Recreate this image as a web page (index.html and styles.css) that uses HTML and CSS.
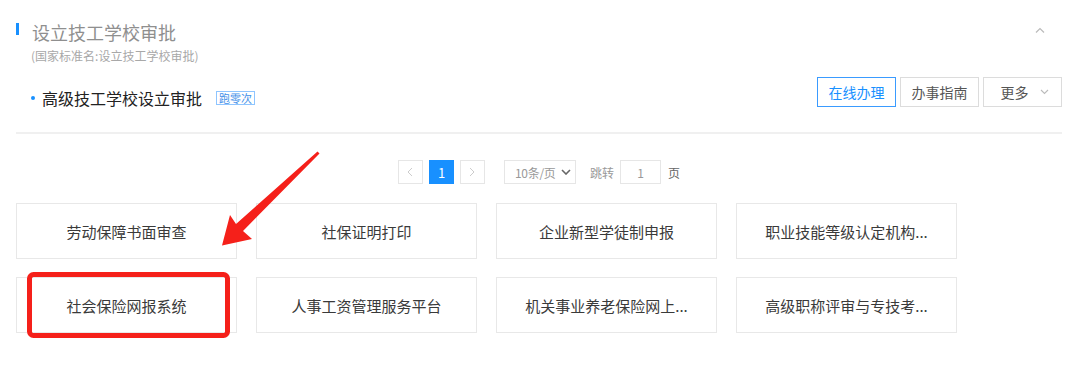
FILE: index.html
```html
<!DOCTYPE html>
<html lang="zh-CN">
<head>
<meta charset="utf-8">
<link rel="stylesheet" href="styles.css">
</head>
<body>
<div class="panel">
  <div class="head">
    <div class="head-titles">
      <h2 class="title">设立技工学校审批</h2>
      <div class="subtitle">(国家标准名:设立技工学校审批)</div>
    </div>
    <svg class="caret-up" width="10" height="6" viewBox="0 0 10 6"><path d="M1 5.5 L5 1.5 L9 5.5" fill="none" stroke="#bbb" stroke-width="1.2"/></svg>
  </div>
  <div class="item-row">
    <div class="item-left">
      <span class="dot"></span>
      <span class="item-name">高级技工学校设立审批</span>
      <span class="badge">跑零次</span>
    </div>
    <div class="actions">
      <button class="btn btn-primary">在线办理</button>
      <button class="btn">办事指南</button>
      <button class="btn btn-more">更多<svg width="9" height="6" viewBox="0 0 9 6"><path d="M1 1 L4.5 4.5 L8 1" fill="none" stroke="#bbb" stroke-width="1.1"/></svg></button>
    </div>
  </div>
  <div class="divider"></div>
  <div class="pager">
    <span class="pg pg-nav"><svg width="6" height="10" viewBox="0 0 6 10"><path d="M5 1 L1 5 L5 9" fill="none" stroke="#ccc" stroke-width="1"/></svg></span>
    <span class="pg pg-active">1</span>
    <span class="pg pg-nav"><svg width="6" height="10" viewBox="0 0 6 10"><path d="M1 1 L5 5 L1 9" fill="none" stroke="#ccc" stroke-width="1"/></svg></span>
    <span class="pg-select"><span class="pg-select-text">10条/页</span><svg width="10" height="6" viewBox="0 0 10 6"><path d="M1 1 L5 5 L9 1" fill="none" stroke="#666" stroke-width="1.6"/></svg></span>
    <span class="pg-label">跳转</span>
    <span class="pg-input">1</span>
    <span class="pg-page">页</span>
  </div>
  <div class="cards">
    <div class="card">劳动保障书面审查</div>
    <div class="card">社保证明打印</div>
    <div class="card">企业新型学徒制申报</div>
    <div class="card">职业技能等级认定机构...</div>
    <div class="card">社会保险网报系统</div>
    <div class="card">人事工资管理服务平台</div>
    <div class="card">机关事业养老保险网上...</div>
    <div class="card">高级职称评审与专技考...</div>
  </div>
</div>
<svg class="annot" width="1080" height="378" viewBox="0 0 1080 378">
  <polygon points="317.5,151.5 319.5,153.5 243,231 252,239 222,245.5 230,215 236,224" fill="#f5201a"/>
  <rect x="29.5" y="274.5" width="198" height="61" rx="4" ry="4" fill="none" stroke="#f5201a" stroke-width="5"/>
</svg>
</body>
</html>
```
FILE: styles.css
```css
* { box-sizing: border-box; }
html, body { margin: 0; padding: 0; background: #fff; }
body {
  width: 1080px;
  height: 378px;
  overflow: hidden;
  position: relative;
  font-family: "Noto Sans CJK SC", "Noto Sans", sans-serif;
  color: #333;
}
.panel {
  padding: 21px 18px 0 16px;
}
.head {
  display: flex;
  justify-content: space-between;
  align-items: flex-start;
}
.title {
  margin: 0;
  font-size: 18px;
  line-height: 22px;
  font-weight: 400;
  color: #8f8f8f;
  padding-left: 16px;
  position: relative;
}
.title::before {
  content: "";
  position: absolute;
  left: 0;
  top: 2px;
  width: 3px;
  height: 12px;
  background: #1890ff;
}
.subtitle {
  margin-top: 4px;
  padding-left: 15px;
  font-size: 12px;
  line-height: 17px;
  color: #a8a8a8;
}
.caret-up {
  margin-top: 6px;
  margin-right: 17px;
}
.item-row {
  display: flex;
  justify-content: space-between;
  align-items: flex-start;
  margin-top: 13px;
}
.item-left {
  display: flex;
  align-items: center;
  margin-top: 11px;
  padding-left: 15px;
  height: 20px;
}
.dot {
  width: 4px;
  height: 4px;
  border-radius: 50%;
  background: #1890ff;
  margin-right: 7px;
}
.item-name {
  font-size: 16px;
  line-height: 20px;
  color: #222;
}
.badge {
  margin-left: 14px;
  height: 14px;
  padding: 0 2px;
  border: 1px solid #8fc5ff;
  color: #3f8fe8;
  font-size: 11px;
  line-height: 12px;
  display: flex;
  align-items: center;
}
.actions {
  display: flex;
  gap: 4px;
}
.btn {
  width: 79px;
  height: 30px;
  border: 1px solid #dcdcdc;
  background: #fff;
  color: #555;
  font-family: inherit;
  font-size: 14px;
  padding: 0;
  display: flex;
  align-items: center;
  justify-content: center;
}
.btn-primary {
  border-color: #3a9bff;
  color: #1890ff;
}
.btn-more {
  gap: 11px;
  padding-left: 4px;
}
.divider {
  margin-top: 24px;
  height: 2px;
  background: #f0f0f0;
}
.pager {
  margin-top: 26px;
  display: flex;
  justify-content: center;
  align-items: center;
  height: 24px;
  font-size: 12px;
  white-space: nowrap;
}
.pg {
  width: 25px;
  height: 24px;
  display: flex;
  align-items: center;
  justify-content: center;
  border: 1px solid #e6e6e6;
}
.pg + .pg { margin-left: 6px; }
.pg-active {
  background: #1890ff;
  border-color: #1890ff;
  color: #fff;
  font-size: 13px;
}
.pg-select {
  margin-left: 19px;
  width: 72px;
  height: 24px;
  border: 1px solid #e6e6e6;
  display: flex;
  align-items: center;
  justify-content: space-between;
  padding: 0 4px 0 10px;
  color: #999;
}
.pg-select-text {
  white-space: nowrap;
  letter-spacing: -0.3px;
}
.pg-label {
  margin-left: 14px;
  color: #999;
}
.pg-input {
  margin-left: 6px;
  width: 41px;
  height: 24px;
  border: 1px solid #e6e6e6;
  display: flex;
  align-items: center;
  justify-content: center;
  color: #999;
}
.pg-page {
  margin-left: 7px;
  color: #666;
}
.cards {
  margin-top: 19px;
  display: grid;
  grid-template-columns: repeat(4, 221px);
  column-gap: 19px;
  row-gap: 18px;
}
.card {
  height: 56px;
  border: 1px solid #e8e8e8;
  display: flex;
  align-items: center;
  justify-content: center;
  font-size: 15px;
  color: #3a3a3a;
}
.annot {
  position: absolute;
  left: 0;
  top: 0;
  pointer-events: none;
}
```
